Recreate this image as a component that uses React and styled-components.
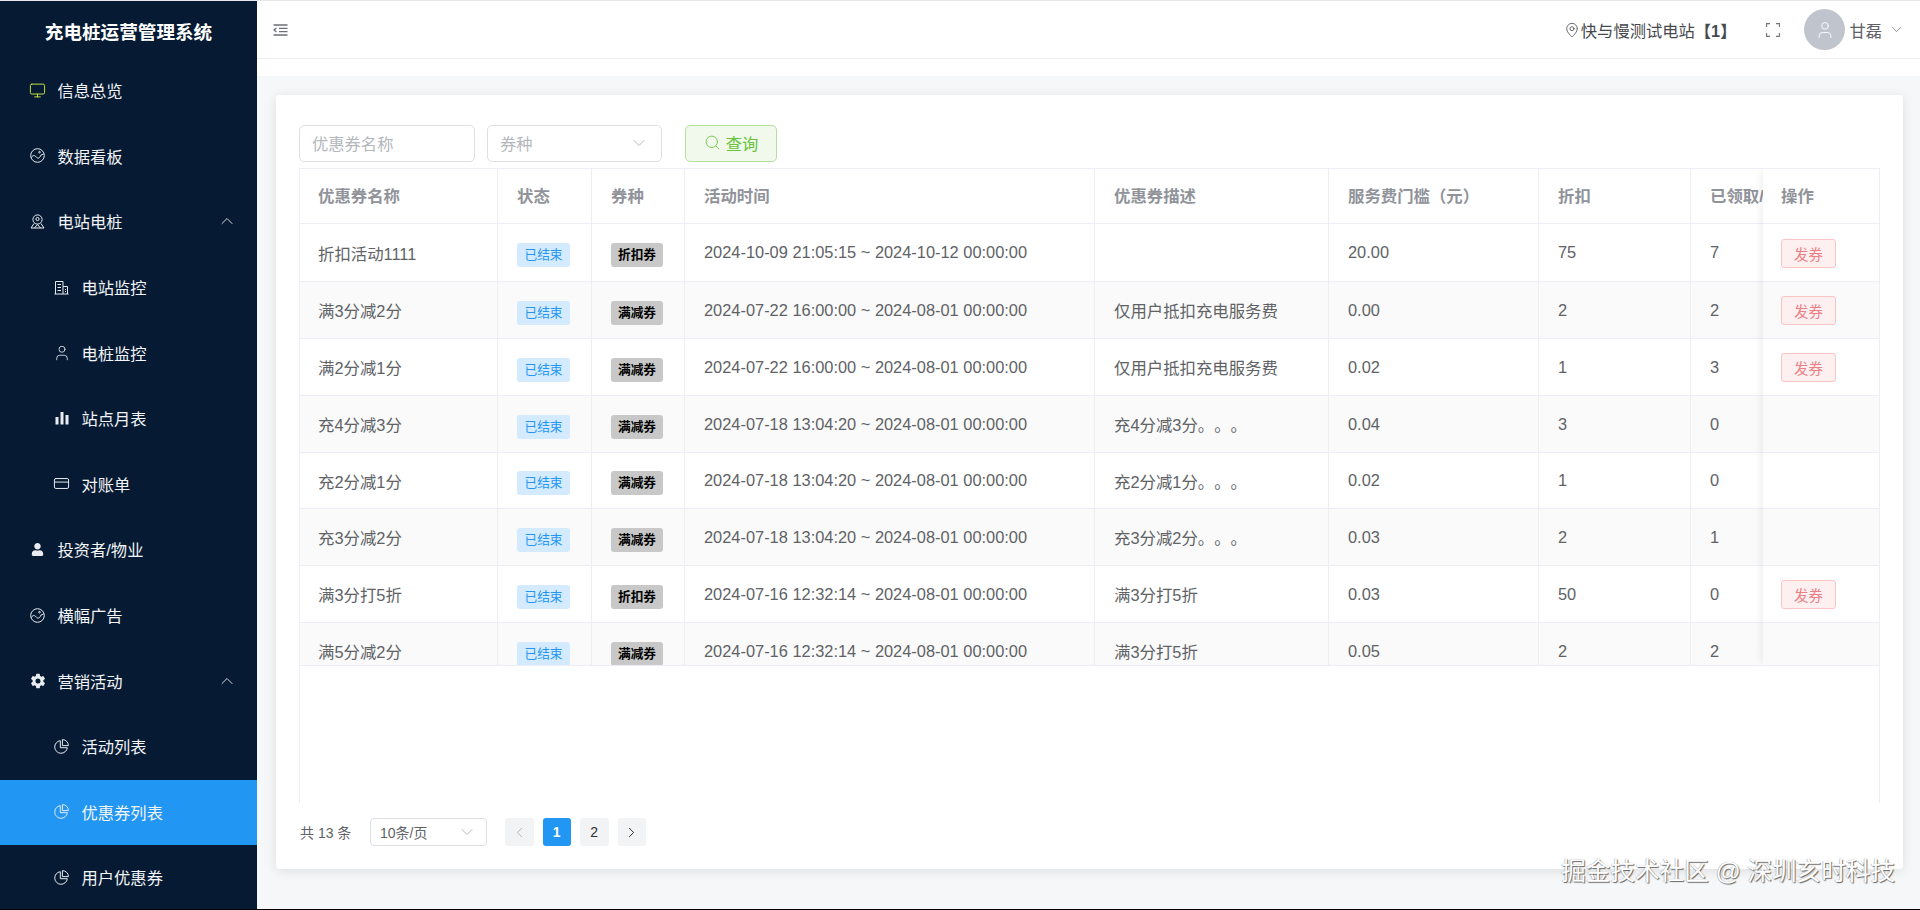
import React from 'react'
import styled, { createGlobalStyle } from 'styled-components'
import { ChevronUp, ChevronDown, ChevronLeft, ChevronRight, Monitor, User, CreditCard, MapPin, Search } from 'lucide-react'
import { FaUser } from 'react-icons/fa'
import { IoSettingsSharp } from 'react-icons/io5'

const FONT = `"Liberation Sans", "Noto Sans CJK SC", sans-serif`

const GlobalStyle = createGlobalStyle`
  html, body { margin: 0; padding: 0; height: 100%; overflow: hidden; }
  body { font-family: ${FONT}; }
  * { box-sizing: border-box; }
`

const WaveIcon = () => (
  <svg width="15" height="15" viewBox="0 0 15 15" fill="none" stroke="currentColor" strokeWidth="1">
    <circle cx="7.5" cy="7.5" r="6.8" />
    <path d="M1.2 9.5 C3 7 4.5 7 6 8.8 S9.5 11 11 7 L13.6 6" />
    <circle cx="9.5" cy="4.2" r=".8" />
  </svg>
)

const StationIcon = () => (
  <svg width="15" height="15" viewBox="0 0 15 15" fill="none" stroke="currentColor" strokeWidth="1">
    <circle cx="7.5" cy="5.5" r="4.6" />
    <circle cx="7.5" cy="5" r="1.6" />
    <path d="M4 9.5 L1 14 H14 L11 9.5 M4.5 14 L7.5 10.5 L10.5 14" />
  </svg>
)

const BuildingIcon = () => (
  <svg width="15" height="15" viewBox="0 0 15 15" fill="none" stroke="currentColor" strokeWidth="1">
    <path d="M1.5 14 V1.5 H9 V14 M0.5 14 H14.5 M9 6.5 H13.5 V14 M3.5 4.5 H7 M3.5 7.5 H7 M3.5 10.5 H7 M11 9.5 H12 M11 11.5 H12" />
  </svg>
)

const BarsIcon = () => (
  <svg width="14" height="14" viewBox="0 0 14 14" fill="currentColor">
    <rect x="0.5" y="6" width="3" height="7.5" />
    <rect x="5.5" y="1" width="3" height="12.5" />
    <rect x="10.5" y="4" width="3" height="9.5" />
  </svg>
)

const PieIcon = () => (
  <svg width="15" height="15" viewBox="0 0 15 15" fill="none" stroke="currentColor" strokeWidth="1">
    <path d="M6.3 1.7 A6.3 6.3 0 1 0 13.3 8.7 H6.3 Z" />
    <path d="M8.4 0.6 A6 6 0 0 1 14.4 6.6 H8.4 Z" />
  </svg>
)

const FoldIcon = () => (
  <svg width="15" height="12" viewBox="0 0 15 12" fill="none" stroke="#6b6f76" strokeWidth="1.3">
    <path d="M0.5 1 H14.5 M6 4.3 H14.5 M6 7.6 H14.5 M0.5 11 H14.5" />
    <path d="M3.5 4 L1 6 L3.5 8" />
  </svg>
)

const FullIcon = () => (
  <svg width="14" height="14" viewBox="0 0 14 14" fill="none" stroke="#70747b" strokeWidth="1.1">
    <path d="M0.6 4 V0.6 H4 M10 0.6 H13.4 V4 M13.4 10 V13.4 H10 M4 13.4 H0.6 V10" />
  </svg>
)

const MENU = [
  { label: '信息总览', icon: <Monitor size={17} strokeWidth={1.4} />, accent: true },
  { label: '数据看板', icon: <WaveIcon /> },
  { label: '电站电桩', icon: <StationIcon />, open: true },
  { label: '电站监控', icon: <BuildingIcon />, sub: true },
  { label: '电桩监控', icon: <User size={18} strokeWidth={1.1} />, sub: true },
  { label: '站点月表', icon: <BarsIcon />, sub: true },
  { label: '对账单', icon: <CreditCard size={17} strokeWidth={1.4} />, sub: true },
  { label: '投资者/物业', icon: <FaUser size={13} /> },
  { label: '横幅广告', icon: <WaveIcon /> },
  { label: '营销活动', icon: <IoSettingsSharp size={16} />, open: true },
  { label: '活动列表', icon: <PieIcon />, sub: true },
  { label: '优惠券列表', icon: <PieIcon />, sub: true, active: true },
  { label: '用户优惠券', icon: <PieIcon />, sub: true },
]

const ROWS = [
  { h: 58, name: '折扣活动1111', type: '折扣券', time: '2024-10-09 21:05:15 ~ 2024-10-12 00:00:00', desc: '', limit: '20.00', off: '75', got: '7', send: true },
  { h: 57, name: '满3分减2分', type: '满减券', time: '2024-07-22 16:00:00 ~ 2024-08-01 00:00:00', desc: '仅用户抵扣充电服务费', limit: '0.00', off: '2', got: '2', send: true },
  { h: 57, name: '满2分减1分', type: '满减券', time: '2024-07-22 16:00:00 ~ 2024-08-01 00:00:00', desc: '仅用户抵扣充电服务费', limit: '0.02', off: '1', got: '3', send: true },
  { h: 57, name: '充4分减3分', type: '满减券', time: '2024-07-18 13:04:20 ~ 2024-08-01 00:00:00', desc: '充4分减3分。。。', limit: '0.04', off: '3', got: '0' },
  { h: 56, name: '充2分减1分', type: '满减券', time: '2024-07-18 13:04:20 ~ 2024-08-01 00:00:00', desc: '充2分减1分。。。', limit: '0.02', off: '1', got: '0' },
  { h: 57, name: '充3分减2分', type: '满减券', time: '2024-07-18 13:04:20 ~ 2024-08-01 00:00:00', desc: '充3分减2分。。。', limit: '0.03', off: '2', got: '1' },
  { h: 57, name: '满3分打5折', type: '折扣券', time: '2024-07-16 12:32:14 ~ 2024-08-01 00:00:00', desc: '满3分打5折', limit: '0.03', off: '50', got: '0', send: true },
  { h: 57, name: '满5分减2分', type: '满减券', time: '2024-07-16 12:32:14 ~ 2024-08-01 00:00:00', desc: '满3分打5折', limit: '0.05', off: '2', got: '2' },
]

const COLS = [198, 94, 93, 410, 234, 210, 152, 220]
const HEADS = ['优惠券名称', '状态', '券种', '活动时间', '优惠券描述', '服务费门槛（元）', '折扣', '已领取/已使用']

export default function App() {
  return (
    <Page>
      <GlobalStyle />
      <Sidebar>
        <Logo>充电桩运营管理系统</Logo>
        {MENU.map((m) => (
          <MenuItem key={m.label} $sub={m.sub} $active={m.active}>
            <MenuIcon $accent={m.accent}>{m.icon}</MenuIcon>
            <span>{m.label}</span>
            {m.open && <MenuArrow><ChevronUp size={20} strokeWidth={1.2} /></MenuArrow>}
          </MenuItem>
        ))}
      </Sidebar>
      <Main>
        <Header>
          <FoldIcon />
          <HeaderRight>
            <Station>
              <MapPin size={16} strokeWidth={1.2} />
              <span>快与慢测试电站<b>【1】</b></span>
            </Station>
            <FullBtn><FullIcon /></FullBtn>
            <Avatar><User size={20} strokeWidth={1.1} /></Avatar>
            <UserName>甘磊</UserName>
            <ChevronDown size={17} strokeWidth={1.1} color="#70747b" />
          </HeaderRight>
        </Header>
        <Strip />
        <Content>
          <Card>
            <Filters>
              <TextBox $w={176}>优惠券名称</TextBox>
              <TextBox $w={175}>
                券种
                <ChevronDown size={20} strokeWidth={1} color="#a8abb2" />
              </TextBox>
              <QueryBtn><Search size={17} strokeWidth={1.2} />查询</QueryBtn>
            </Filters>
            <TableFrame>
              <TableClip>
                <ScrollPart>
                  <DataTable>
                    <colgroup>
                      {COLS.map((w, i) => <col key={i} width={w} />)}
                    </colgroup>
                    <thead>
                      <tr>
                        {HEADS.map((h) => <Th key={h}>{h}</Th>)}
                      </tr>
                    </thead>
                    <tbody>
                      {ROWS.map((r, i) => (
                        <Row key={i} $h={r.h} $odd={i % 2 === 1}>
                          <Td>{r.name}</Td>
                          <Td><StatusTag>已结束</StatusTag></Td>
                          <Td><TypeTag>{r.type}</TypeTag></Td>
                          <Td>{r.time}</Td>
                          <Td>{r.desc}</Td>
                          <Td>{r.limit}</Td>
                          <Td>{r.off}</Td>
                          <Td>{r.got}</Td>
                        </Row>
                      ))}
                    </tbody>
                  </DataTable>
                </ScrollPart>
                <FixedCol>
                  <DataTable>
                    <thead>
                      <tr><Th>操作</Th></tr>
                    </thead>
                    <tbody>
                      {ROWS.map((r, i) => (
                        <Row key={i} $h={r.h} $odd={i % 2 === 1}>
                          <Td>{r.send && <SendBtn>发券</SendBtn>}</Td>
                        </Row>
                      ))}
                    </tbody>
                  </DataTable>
                </FixedCol>
              </TableClip>
            </TableFrame>
            <Pager>
              <Total>共 13 条</Total>
              <SizeSelect>
                10条/页
                <ChevronDown size={20} strokeWidth={1} color="#a8abb2" />
              </SizeSelect>
              <PageBtn $muted><ChevronLeft size={17} strokeWidth={1.2} /></PageBtn>
              <PageBtn $active>1</PageBtn>
              <PageBtn>2</PageBtn>
              <PageBtn><ChevronRight size={17} strokeWidth={1.4} /></PageBtn>
            </Pager>
          </Card>
        </Content>
      </Main>
      <Watermark>掘金技术社区 @ 深圳亥时科技</Watermark>
    </Page>
  )
}

const Page = styled.div`
  position: relative;
  display: flex;
  width: 1920px;
  height: 910px;
  border-top: 1px solid #e4e7ec;
  border-bottom: 1px solid #000;
  overflow: hidden;
  font-family: ${FONT};
  font-size: 16.3px;
  text-spacing-trim: space-all;
`

const Sidebar = styled.aside`
  width: 257px;
  flex-shrink: 0;
  background: #061b33;
  color: #fff;
  overflow: hidden;
`

const Logo = styled.div`
  height: 57px;
  padding-top: 1px;
  display: flex;
  align-items: center;
  justify-content: center;
  font-size: 18.6px;
  font-weight: bold;
`

const MenuItem = styled.div`
  display: flex;
  align-items: center;
  height: 65.6px;
  padding: 0 0 1px ${(p) => (p.$sub ? '54px' : '30px')};
  background: ${(p) => (p.$active ? '#2196f3' : 'transparent')};
  color: #f2f4f7;
`

const MenuIcon = styled.span`
  display: flex;
  justify-content: center;
  width: 15px;
  margin-right: 12.5px;
  color: ${(p) => (p.$accent ? '#c4df3f' : '#e8ebef')};
  svg { flex-shrink: 0; }
`

const MenuArrow = styled.span`
  display: flex;
  margin-left: auto;
  margin-right: 20px;
  color: #d5d9df;
`

const Main = styled.main`
  flex: 1;
  display: flex;
  flex-direction: column;
  min-width: 0;
`

const Header = styled.header`
  height: 58px;
  flex-shrink: 0;
  display: flex;
  align-items: center;
  justify-content: space-between;
  padding: 0 15px 0 16px;
  background: #fff;
  border-bottom: 1px solid #ebedf0;
`

const HeaderRight = styled.div`
  display: flex;
  align-items: center;
  color: #4a4d52;
`

const Station = styled.div`
  display: flex;
  align-items: center;
  gap: 1px;
  white-space: nowrap;
  color: #46494e;
  b { font-weight: bold; }
`

const FullBtn = styled.span`
  display: flex;
  margin-left: 30px;
`

const Avatar = styled.div`
  width: 41px;
  height: 41px;
  margin-left: 24px;
  border-radius: 50%;
  background: #c0c4cc;
  color: #fff;
  display: flex;
  align-items: center;
  justify-content: center;
`

const UserName = styled.span`
  margin: 0 6px 0 4px;
  color: #606266;
`

const Strip = styled.div`
  height: 17px;
  flex-shrink: 0;
  background: #fff;
`

const Content = styled.div`
  flex: 1;
  padding: 19px 17px 39px 19px;
  background: #f6f7f8;
  min-height: 0;
`

const Card = styled.section`
  height: 774px;
  padding: 30px 23px 0 23px;
  background: #fff;
  border-radius: 4px;
  box-shadow: 0 2px 12px rgba(0, 0, 0, 0.1);
`

const Filters = styled.div`
  display: flex;
  height: 37px;
  gap: 12px;
  margin-bottom: 6px;
`

const TextBox = styled.div`
  width: ${(p) => p.$w}px;
  display: flex;
  align-items: center;
  justify-content: space-between;
  padding: 0 12px 2px;
  border: 1px solid #dcdfe6;
  border-radius: 5px;
  color: #b4b7bd;
`

const QueryBtn = styled.button`
  width: 92px;
  margin-left: 11px;
  padding: 0 0 2px;
  display: flex;
  align-items: center;
  justify-content: center;
  gap: 5px;
  font: inherit;
  color: #67c23a;
  background: #f0f9eb;
  border: 1px solid #b3e19d;
  border-radius: 5px;
`

const TableFrame = styled.div`
  height: 635px;
  border: 1px solid #ebeef5;
  border-bottom: none;
`

const TableClip = styled.div`
  display: flex;
  height: 497px;
  overflow: hidden;
  border-bottom: 1px solid #ebeef5;
`

const ScrollPart = styled.div`
  flex: 1;
  min-width: 0;
  overflow: hidden;
`

const FixedCol = styled.div`
  position: relative;
  width: 116px;
  flex-shrink: 0;
  background: #fff;
  box-shadow: -5px 0 8px -3px rgba(0, 0, 0, 0.07);
`

const DataTable = styled.table`
  table-layout: fixed;
  width: 100%;
  border-collapse: separate;
  border-spacing: 0;
  color: #606266;
  font-size: 16.4px;
  white-space: nowrap;
  &:has(col) { width: 1611px; }
`

const Th = styled.th`
  height: 55px;
  padding: 0 19px 2px;
  text-align: left;
  font-weight: bold;
  color: #909399;
  border-right: 1px solid #ebeef5;
  border-bottom: 1px solid #ebeef5;
  background: #fff;
  overflow: hidden;
  &:first-child { padding-left: 18px; }
  ${FixedCol} & { border-right: none; }
`

const Td = styled.td`
  padding: 0 19px;
  border-right: 1px solid #ebeef5;
  border-bottom: 1px solid #ebeef5;
  overflow: hidden;
  &:first-child { padding-left: 18px; }
  ${FixedCol} & { border-right: none; }
`

const Row = styled.tr`
  height: ${(p) => p.$h}px;
  background: ${(p) => (p.$odd ? '#fafafa' : '#fff')};
`

const TagBase = styled.span`
  display: inline-block;
  height: 24px;
  line-height: 24px;
  font-size: 12.7px;
  border-radius: 3px;
  text-align: center;
  vertical-align: -6px;
`

const StatusTag = styled(TagBase)`
  width: 53px;
  background: #d3eaff;
  color: #2196f3;
`

const TypeTag = styled(TagBase)`
  width: 52px;
  background: #c8c8c8;
  color: #000;
  font-weight: bold;
`

const SendBtn = styled.button`
  display: block;
  width: 55px;
  height: 29px;
  margin-top: 1px;
  padding: 0;
  font: inherit;
  font-size: 14.4px;
  color: #ea7f86;
  background: #fef0f0;
  border: 1px solid #fbc4c4;
  border-radius: 3px;
`

const Pager = styled.div`
  display: flex;
  align-items: center;
  height: 28px;
  margin-top: 15px;
  font-size: 14px;
  color: #606266;
`

const Total = styled.span`
  width: 71px;
  padding-left: 1px;
  white-space: nowrap;
`

const SizeSelect = styled.div`
  width: 117px;
  height: 28px;
  margin-right: 18px;
  padding: 0 9px;
  display: flex;
  align-items: center;
  justify-content: space-between;
  border: 1px solid #dcdfe6;
  border-radius: 4px;
  color: #606266;
`

const PageBtn = styled.span`
  width: 28.5px;
  height: 28px;
  margin-right: 9px;
  display: flex;
  align-items: center;
  justify-content: center;
  border-radius: 3px;
  font-weight: ${(p) => (p.$active ? 'bold' : 'normal')};
  color: ${(p) => (p.$active ? '#fff' : p.$muted ? '#a8abb2' : '#303133')};
  background: ${(p) => (p.$active ? '#2196f3' : '#f2f3f5')};
`

const Watermark = styled.div`
  position: absolute;
  right: 25px;
  bottom: 22px;
  font-size: 24.6px;
  color: #fff;
  white-space: nowrap;
  text-shadow: 1px 1px 1px #666, -0.5px 0 1px #aaa;
`
